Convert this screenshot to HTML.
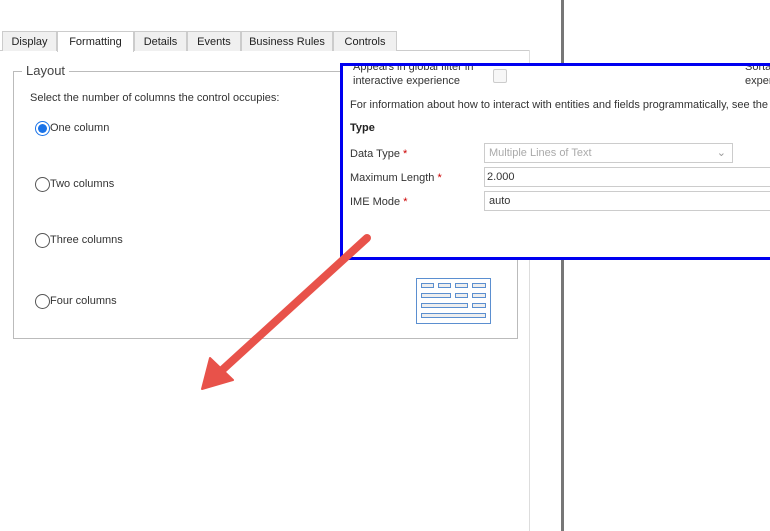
<!DOCTYPE html>
<html><head><style>
body{margin:0;width:770px;height:531px;background:#fff;position:relative;overflow:hidden;font-family:"Segoe UI","Liberation Sans",sans-serif;font-size:11px;color:#333}
.a{position:absolute}
.tab{position:absolute;top:31px;height:19px;border:1px solid #ccc;border-bottom:none;background:#f0f0f0;font-size:11px;line-height:20px;text-align:center;color:#222}
.r{position:absolute;width:13px;height:13px;border:1px solid #555;border-radius:50%;background:#fff}
.lbl{position:absolute;font-size:11px;color:#333}
.star{color:#c00}
</style></head><body>
<div class="a" style="left:0;top:50px;width:529px;height:1px;background:#ccc"></div>
<div class="a" style="left:529px;top:50px;width:1px;height:481px;background:#ddd"></div>
<div class="a" style="left:561px;top:0;width:3px;height:531px;background:#777"></div>
<div class="tab" style="left:2px;width:53px">Display</div>
<div class="tab" style="left:57px;width:75px;background:#fff;height:20px">Formatting</div>
<div class="tab" style="left:134px;width:51px">Details</div>
<div class="tab" style="left:187px;width:52px">Events</div>
<div class="tab" style="left:241px;width:90px">Business Rules</div>
<div class="tab" style="left:333px;width:62px">Controls</div>
<div class="a" style="left:13px;top:71px;width:503px;height:266px;border:1px solid #bbb"></div>
<div class="a" style="left:22px;top:63px;background:#fff;padding:0 4px;font-size:13px;color:#444">Layout</div>
<div class="lbl" style="left:30px;top:92px">Select the number of columns the control occupies:</div>
<div class="r" style="left:35px;top:121px;border-color:#1a73e8"></div>
<div class="a" style="left:38px;top:124px;width:9px;height:9px;border-radius:50%;background:#1a73e8"></div>
<div class="lbl" style="left:50px;top:122px">One column</div>
<div class="r" style="left:35px;top:177px"></div><div class="lbl" style="left:50px;top:178px">Two columns</div>
<div class="r" style="left:35px;top:233px"></div><div class="lbl" style="left:50px;top:234px">Three columns</div>
<div class="r" style="left:35px;top:294px"></div><div class="lbl" style="left:50px;top:295px">Four columns</div>
<svg class="a" style="left:416px;top:278px" width="76" height="46"><g fill="#eee" stroke="#5b8fd0" stroke-width="1"><rect x=".5" y=".5" width="74" height="45" fill="#fff"/><rect x="5.5" y="5.5" width="12" height="4"/><rect x="22.5" y="5.5" width="12" height="4"/><rect x="39.5" y="5.5" width="12" height="4"/><rect x="56.5" y="5.5" width="13" height="4"/><rect x="5.5" y="15.5" width="29" height="4"/><rect x="39.5" y="15.5" width="12" height="4"/><rect x="56.5" y="15.5" width="13" height="4"/><rect x="5.5" y="25.5" width="46" height="4"/><rect x="56.5" y="25.5" width="13" height="4"/><rect x="5.5" y="35.5" width="64" height="4"/></g></svg>
<div class="a" style="left:340px;top:63px;width:433px;height:191px;border:3px solid #0000f0;background:#fff;overflow:hidden">
<div class="lbl" style="left:10px;top:-6px;line-height:14px">Appears in global filter in<br>interactive experience</div>
<div class="a" style="left:150px;top:3px;width:12px;height:12px;border:1px solid #ccc;border-radius:2px;background:#f7f7f7"></div>
<div class="lbl" style="left:402px;top:-6px;line-height:14px">Sorta<br>exper</div>
<div class="lbl" style="left:7px;top:33px;white-space:nowrap">For information about how to interact with entities and fields programmatically, see the</div>
<div class="lbl" style="left:7px;top:56px;font-weight:bold;color:#222">Type</div>
<div class="lbl" style="left:7px;top:82px">Data Type <span class="star">*</span></div>
<div class="a" style="left:141px;top:77px;width:243px;height:18px;border:1px solid #ccc;color:#aaa;line-height:18px;padding-left:4px">Multiple Lines of Text<span style="position:absolute;right:6px;color:#999">&#8964;</span></div>
<div class="lbl" style="left:7px;top:106px">Maximum Length <span class="star">*</span></div>
<div class="a" style="left:141px;top:101px;width:300px;height:18px;border:1px solid #ccc;line-height:18px;padding-left:2px">2.000</div>
<div class="lbl" style="left:7px;top:130px">IME Mode <span class="star">*</span></div>
<div class="a" style="left:141px;top:125px;width:300px;height:18px;border:1px solid #ccc;line-height:18px;padding-left:4px">auto</div>
</div>
<svg class="a" style="left:0;top:0" width="770" height="531"><g fill="#e8524a" stroke="#e8524a"><line x1="367" y1="238" x2="220" y2="372" stroke-width="8" stroke-linecap="round"/><polygon points="210,358 233,380 202,389" stroke-width="2" stroke-linejoin="round"/></g></svg>
</body></html>
